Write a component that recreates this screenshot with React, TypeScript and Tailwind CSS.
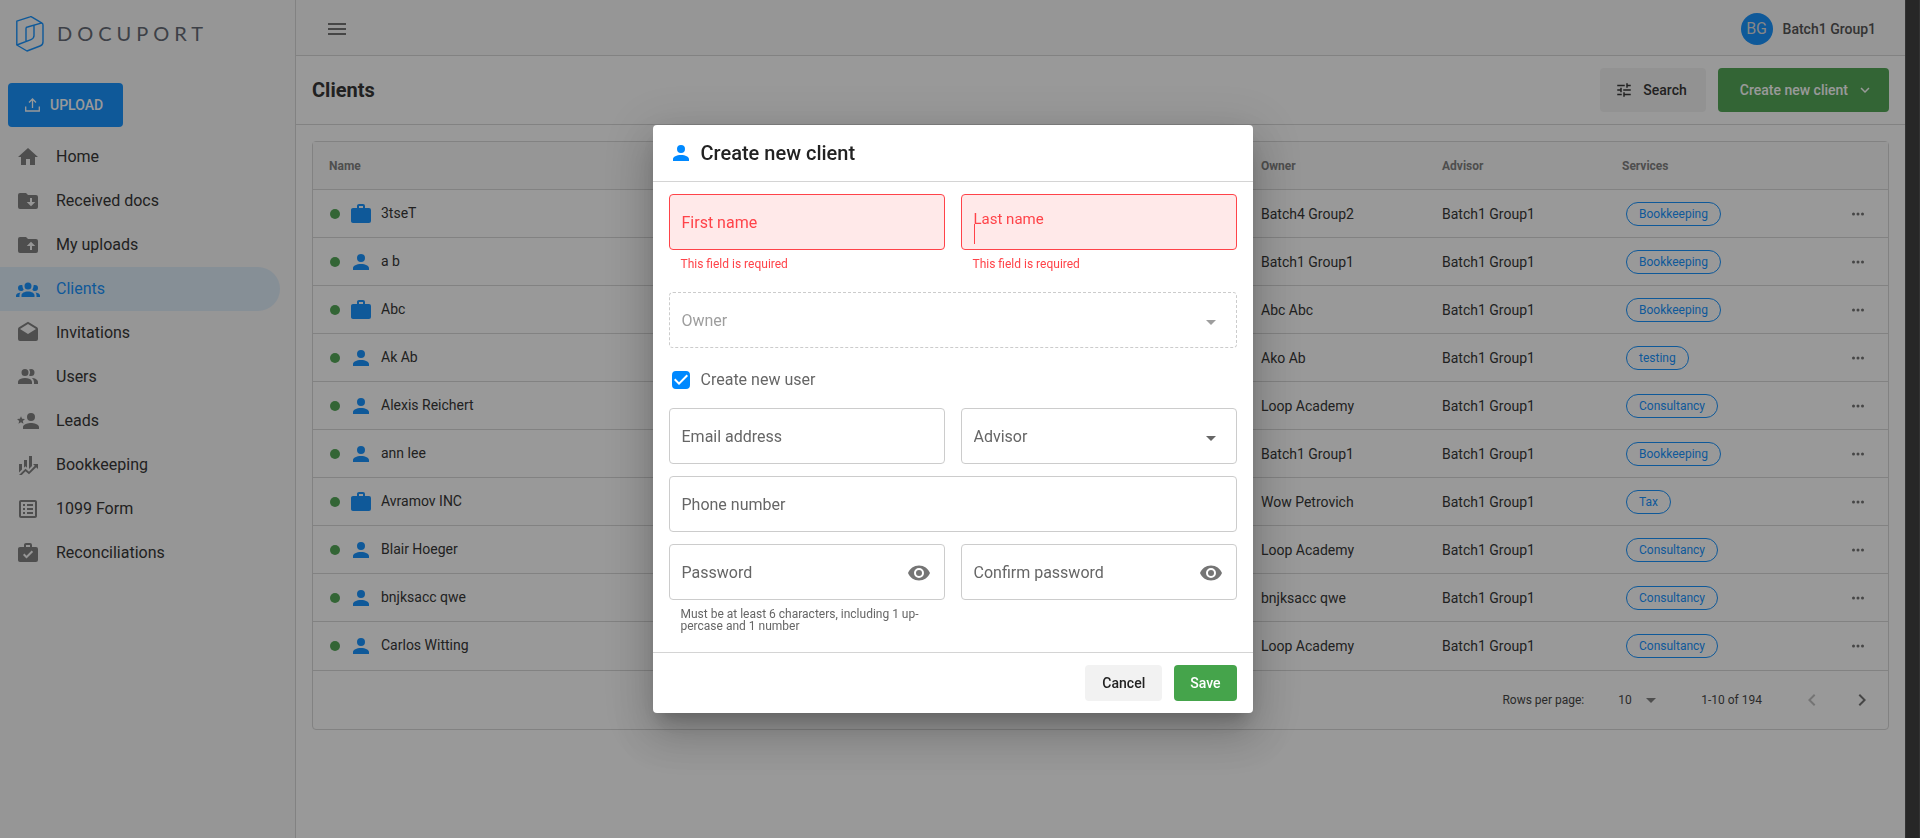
import React from 'react';

const icons = {
  home: 'M10,20V14H14V20H19V12H22L12,3L2,12H5V20H10Z',
  folderDown:
    'M20,6A2,2 0 0,1 22,8V18A2,2 0 0,1 20,20H4A2,2 0 0,1 2,18V6A2,2 0 0,1 4,4H10L12,6H20M19.25,13H16V9H14V13H10.75L15,17.25',
  folderUp:
    'M20,6A2,2 0 0,1 22,8V18A2,2 0 0,1 20,20H4A2,2 0 0,1 2,18V6A2,2 0 0,1 4,4H10L12,6H20M10.75,13H14V17H16V13H19.25L15,8.75',
  group:
    'M12,5.5A3.5,3.5 0 0,1 15.5,9A3.5,3.5 0 0,1 12,12.5A3.5,3.5 0 0,1 8.5,9A3.5,3.5 0 0,1 12,5.5M5,8C5.56,8 6.08,8.15 6.53,8.42C6.38,9.85 6.8,11.27 7.66,12.38C7.16,13.34 6.16,14 5,14A3,3 0 0,1 2,11A3,3 0 0,1 5,8M19,8A3,3 0 0,1 22,11A3,3 0 0,1 19,14C17.84,14 16.84,13.34 16.34,12.38C17.2,11.27 17.62,9.85 17.47,8.42C17.92,8.15 18.44,8 19,8M5.5,18.25C5.5,16.18 8.41,14.5 12,14.5C15.59,14.5 18.5,16.18 18.5,18.25V20H5.5V18.25M0,20V18.5C0,17.11 1.89,15.94 4.45,15.6C3.86,16.28 3.5,17.22 3.5,18.25V20H0M24,20H20.5V18.25C20.5,17.22 20.14,16.28 19.55,15.6C22.11,15.94 24,17.11 24,18.5V20Z',
  mail:
    'M4,8L12,13L20,8V8L12,3L4,8V8M22,8V18A2,2 0 0,1 20,20H4A2,2 0 0,1 2,18V8C2,7.27 2.39,6.64 2.97,6.29L12,0.64L21.03,6.29C21.61,6.64 22,7.27 22,8Z',
  users:
    'M16 17V19H2V17S2 13 9 13 16 17 16 17M12.5 7.5A3.5 3.5 0 1 0 9 11A3.5 3.5 0 0 0 12.5 7.5M15.94 13A5.32 5.32 0 0 1 18 17V19H22V17S22 13.37 15.94 13M15 4A3.39 3.39 0 0 0 13.07 4.59A5 5 0 0 1 13.07 10.41A3.39 3.39 0 0 0 15 11A3.5 3.5 0 0 0 15 4Z',
  star:
    'M15,14C12.33,14 7,15.33 7,18V20H23V18C23,15.33 17.67,14 15,14M15,12A4,4 0 0,0 19,8A4,4 0 0,0 15,4A4,4 0 0,0 11,8A4,4 0 0,0 15,12M5,13.28L7.45,14.77L6.8,11.96L9,10.08L6.11,9.83L5,7.19L3.87,9.83L1,10.08L3.18,11.96L2.5,14.77L5,13.28Z',
  finance:
    'M6,16.5L3,19.44V11H6M11,14.66L9.43,13.32L8,14.64V7H11M16,13L13,16V3H16M18.81,12.81L17,11H22V16L20.21,14.21L13,21.36L9.53,18.34L5.75,22H3L9.47,15.66L13,18.64',
  list:
    'M11 15H17V17H11V15M9 7H7V9H9V7M11 13H17V11H11V13M11 9H17V7H11V9M9 11H7V13H9V11M21 5V19C21 20.1 20.1 21 19 21H5C3.9 21 3 20.1 3 19V5C3 3.9 3.9 3 5 3H19C20.1 3 21 3.9 21 5M19 5H5V19H19V5M9 15H7V17H9V15Z',
  briefcaseCheck:
    'M10,2H14A2,2 0 0,1 16,4V6H20A2,2 0 0,1 22,8V19A2,2 0 0,1 20,21H4C2.89,21 2,20.1 2,19V8C2,6.89 2.89,6 4,6H8V4C8,2.89 8.89,2 10,2M14,6V4H10V6H14M10.5,17.5L17.09,10.91L15.68,9.5L10.5,14.67L8.41,12.59L7,14L10.5,17.5Z',
  briefcase:
    'M10,2H14A2,2 0 0,1 16,4V6H20A2,2 0 0,1 22,8V19A2,2 0 0,1 20,21H4C2.89,21 2,20.1 2,19V8C2,6.89 2.89,6 4,6H8V4C8,2.89 8.89,2 10,2M14,6V4H10V6H14Z',
  person:
    'M12,4A4,4 0 0,1 16,8A4,4 0 0,1 12,12A4,4 0 0,1 8,8A4,4 0 0,1 12,4M12,14C16.42,14 20,15.79 20,18V20H4V18C4,15.79 7.58,14 12,14Z',
  menu: 'M3,6H21V8H3V6M3,11H21V13H3V11M3,16H21V18H3V16Z',
  tune:
    'M3,17V19H9V17H3M3,5V7H13V5H3M13,21V19H21V17H13V15H11V21H13M7,9V11H3V13H7V15H9V9H7M21,13V11H11V13H21M15,9H17V7H21V5H17V3H15V9Z',
  chevronDown: 'M7.41,8.58L12,13.17L16.59,8.58L18,10L12,16L6,10L7.41,8.58Z',
  chevronLeft: 'M15.41,16.58L10.83,12L15.41,7.41L14,6L8,12L14,18L15.41,16.58Z',
  chevronRight: 'M8.59,16.58L13.17,12L8.59,7.41L10,6L16,12L10,18L8.59,16.58Z',
  caret: 'M7,10L12,15L17,10H7Z',
  eye:
    'M12,9A3,3 0 0,0 9,12A3,3 0 0,0 12,15A3,3 0 0,0 15,12A3,3 0 0,0 12,9M12,17A5,5 0 0,1 7,12A5,5 0 0,1 12,7A5,5 0 0,1 17,12A5,5 0 0,1 12,17M12,4.5C7,4.5 2.73,7.61 1,12C2.73,16.39 7,19.5 12,19.5C17,19.5 21.27,16.39 23,12C21.27,7.61 17,4.5 12,4.5Z',
  dots:
    'M16,12A2,2 0 0,1 18,10A2,2 0 0,1 20,12A2,2 0 0,1 18,14A2,2 0 0,1 16,12M10,12A2,2 0 0,1 12,10A2,2 0 0,1 14,12A2,2 0 0,1 12,14A2,2 0 0,1 10,12M4,12A2,2 0 0,1 6,10A2,2 0 0,1 8,12A2,2 0 0,1 6,14A2,2 0 0,1 4,12Z',
};

type IconName = keyof typeof icons;

function Icon({ name, className = 'size-6' }: { name: IconName; className?: string }) {
  return (
    <svg viewBox="0 0 24 24" fill="currentColor" aria-hidden="true" className={`shrink-0 ${className}`}>
      <path d={icons[name]} />
    </svg>
  );
}

const navItems: { icon: IconName; label: string }[] = [
  { icon: 'home', label: 'Home' },
  { icon: 'folderDown', label: 'Received docs' },
  { icon: 'folderUp', label: 'My uploads' },
  { icon: 'group', label: 'Clients' },
  { icon: 'mail', label: 'Invitations' },
  { icon: 'users', label: 'Users' },
  { icon: 'star', label: 'Leads' },
  { icon: 'finance', label: 'Bookkeeping' },
  { icon: 'list', label: '1099 Form' },
  { icon: 'briefcaseCheck', label: 'Reconciliations' },
];

const clients: { name: string; kind: 'briefcase' | 'person'; owner: string; service: string }[] = [
  { name: '3tseT', kind: 'briefcase', owner: 'Batch4 Group2', service: 'Bookkeeping' },
  { name: 'a b', kind: 'person', owner: 'Batch1 Group1', service: 'Bookkeeping' },
  { name: 'Abc', kind: 'briefcase', owner: 'Abc Abc', service: 'Bookkeeping' },
  { name: 'Ak Ab', kind: 'person', owner: 'Ako Ab', service: 'testing' },
  { name: 'Alexis Reichert', kind: 'person', owner: 'Loop Academy', service: 'Consultancy' },
  { name: 'ann lee', kind: 'person', owner: 'Batch1 Group1', service: 'Bookkeeping' },
  { name: 'Avramov INC', kind: 'briefcase', owner: 'Wow Petrovich', service: 'Tax' },
  { name: 'Blair Hoeger', kind: 'person', owner: 'Loop Academy', service: 'Consultancy' },
  { name: 'bnjksacc qwe', kind: 'person', owner: 'bnjksacc qwe', service: 'Consultancy' },
  { name: 'Carlos Witting', kind: 'person', owner: 'Loop Academy', service: 'Consultancy' },
];

function Sidebar() {
  return (
    <aside className="w-[296px] shrink-0 border-r border-[#d4d4d4] bg-[#f9f9f9]">
      <a href="#home" className="flex items-center gap-[13px] pt-4 pl-4">
        <svg viewBox="0 0 28 36" className="h-9 w-7" fill="none" stroke="#0089ff" strokeWidth="1.4" strokeLinejoin="round" aria-hidden="true">
          <path d="M0.8 5.2 14 0.8a2 2 0 0 1 2 .3L26 7.2c.8.5 1 1 1 2V26c0 2-1 3.300-3 4L11 35 .8 29Z" />
          <path d="M.8 29 15 23.600c2-.8 3-2 3-4V9.500M26 6.800 11.500 11a1.500 1.500 0 0 0-1.500 1.500v12.800" />
        </svg>
        <span className="pb-0.5 font-['Lato'] text-[20px] leading-6 tracking-[5px] text-[#555b68]">DOCUPORT</span>
      </a>
      <div className="pt-[31px] pl-2">
        <button className="flex h-11 items-center gap-[10px] rounded bg-[#0089ff] pr-5 pl-[17px] text-sm font-medium text-white">
          <svg viewBox="0 0 15 14" className="h-[14px] w-[15px]" fill="none" stroke="currentColor" strokeWidth="1.3" aria-hidden="true">
            <path d="M.7 8.500V13H14.300V8.500M7.500 10V1.200M4 4.500l3.500-3.500L11 4.500" />
          </svg>
          UPLOAD
        </button>
      </div>
      <nav className="pt-2 pr-[15px]">
        {navItems.map((item) => {
          const active = item.label === 'Clients';
          return (
            <a
              key={item.label}
              href="#nav"
              className={`flex h-11 items-center gap-4 rounded-r-full pl-4 text-base ${
                active ? 'bg-[#ddecfa] text-[#0089ff]' : 'text-[#222]'
              }`}
            >
              <Icon name={item.icon} className={active ? 'size-6 text-[#0089ff]' : 'size-6 text-[#757575]'} />
              {item.label}
            </a>
          );
        })}
      </nav>
    </aside>
  );
}

function ClientsTable() {
  return (
    <div className="m-4 rounded border border-[#d4d4d4]">
      <table className="w-full table-fixed border-separate border-spacing-0 text-left text-sm text-[#222]">
        <colgroup>
          <col />
          <col className="w-[181px]" />
          <col className="w-[180px]" />
          <col className="w-[221px]" />
          <col className="w-[61px]" />
        </colgroup>
        <thead>
          <tr className="h-12 bg-[#f9f9f9] text-xs text-[#757575]">
            <th className="border-b border-[#d4d4d4] px-4 font-bold">Name</th>
            <th className="border-b border-[#d4d4d4] px-4 font-bold">Owner</th>
            <th className="border-b border-[#d4d4d4] px-4 font-bold">Advisor</th>
            <th className="border-b border-[#d4d4d4] px-4 font-bold">Services</th>
            <th className="border-b border-[#d4d4d4]" aria-label="Actions" />
          </tr>
        </thead>
        <tbody className="[&>tr:not(:last-child)>td]:border-b [&>tr>td]:border-[#d4d4d4]">
          {clients.map((c) => (
            <tr key={c.name} className="h-12">
              <td className="px-4">
                <div className="flex items-center">
                  <span className="ml-px size-[10px] rounded-full bg-[#43a047]" />
                  <Icon name={c.kind} className="ml-[9px] size-6 text-[#0089ff]" />
                  <span className="ml-2 pb-0.5">{c.name}</span>
                </div>
              </td>
              <td className="px-4">{c.owner}</td>
              <td className="px-4">Batch1 Group1</td>
              <td className="px-5">
                <span className="inline-flex h-6 items-center rounded-full border border-[#0089ff] px-3 align-middle text-xs text-[#0089ff]">
                  {c.service}
                </span>
              </td>
              <td>
                <button aria-label="Row actions" className="mx-auto flex text-[#666]">
                  <Icon name="dots" className="size-[18px]" />
                </button>
              </td>
            </tr>
          ))}
        </tbody>
      </table>
      <div className="flex h-[59px] items-center justify-end border-t border-[#d4d4d4] pr-[14px] text-xs text-[#333]">
        <label htmlFor="rows">Rows per page:</label>
        <div className="ml-[34px] grid w-[45px] items-center">
          <select id="rows" className="col-start-1 row-start-1 h-8 w-full appearance-none bg-transparent">
            <option>10</option>
          </select>
          <Icon name="caret" className="pointer-events-none col-start-1 row-start-1 size-6 justify-self-end text-[#757575]" />
        </div>
        <span className="ml-[38px]">1-10 of 194</span>
        <button aria-label="Previous page" disabled className="ml-[38px] text-[#bbb]">
          <Icon name="chevronLeft" />
        </button>
        <button aria-label="Next page" className="ml-[26px] text-[#666]">
          <Icon name="chevronRight" />
        </button>
      </div>
    </div>
  );
}

function TextField({
  id,
  label,
  type = 'text',
  error,
  hint,
  typing,
}: {
  id: string;
  label: string;
  type?: string;
  error?: string;
  hint?: string;
  typing?: boolean;
}) {
  return (
    <div className="min-w-0">
      <div
        className={`relative flex h-14 items-center rounded border ${
          error ? 'border-[#ff4349] bg-[#ffe9e9] text-[#ff4349]' : 'border-[#ccc] text-[#666]'
        }`}
      >
        <label
          htmlFor={id}
          className={
            typing
              ? 'pointer-events-none absolute top-[14px] left-3 text-[15px] leading-5'
              : 'pointer-events-none absolute top-4 left-3 text-base'
          }
        >
          {label}
        </label>
        {typing && <span className="absolute top-[29px] left-3 h-5 w-px bg-[#ff4349]" />}
        <input id={id} type={type} className="h-full min-w-0 flex-1 bg-transparent px-3 outline-none" />
        {type === 'password' && (
          <button type="button" aria-label="Show password" className="mt-px mr-[13px] text-[#757575]">
            <Icon name="eye" />
          </button>
        )}
      </div>
      {error && <p className="px-3 pt-2 text-xs leading-3 text-[#ff4349]">{error}</p>}
      {hint && <p className="px-3 pt-2 text-xs leading-3 text-[#666]">{hint}</p>}
    </div>
  );
}

function SelectField({ id, label, disabled }: { id: string; label: string; disabled?: boolean }) {
  return (
    <div
      className={`grid h-14 min-w-0 items-center rounded border border-[#ccc] ${
        disabled ? 'border-dashed text-[#9e9e9e]' : 'text-[#666]'
      }`}
    >
      <select
        id={id}
        aria-label={label}
        disabled={disabled}
        className="col-start-1 row-start-1 h-full w-full appearance-none bg-transparent px-3 pt-0.5 text-base opacity-100 outline-none"
      >
        <option>{label}</option>
      </select>
      <Icon name="caret" className="pointer-events-none col-start-1 row-start-1 mt-[3px] mr-[13px] size-6 justify-self-end" />
    </div>
  );
}

function CreateClientDialog() {
  return (
    <form
      role="dialog"
      aria-labelledby="dialog-title"
      className="w-full max-w-[600px] rounded bg-white shadow-[0_11px_15px_-7px_rgba(0,0,0,.2),0_24px_38px_3px_rgba(0,0,0,.14),0_9px_46px_8px_rgba(0,0,0,.12)]"
    >
      <header className="flex h-[57px] items-center gap-2 border-b border-[#d4d4d4] px-4">
        <Icon name="person" className="size-6 text-[#0089ff]" />
        <h2 id="dialog-title" className="text-xl font-medium text-[#222]">
          Create new client
        </h2>
      </header>
      <div className="flex flex-col gap-3 px-4 pt-3 pb-5">
        <div className="grid grid-cols-2 gap-4 pb-[10px]">
          <TextField id="first" label="First name" error="This field is required" />
          <TextField id="last" label="Last name" error="This field is required" typing />
        </div>
        <SelectField id="owner" label="Owner" disabled />
        <label className="flex h-9 items-center gap-2 pt-1 text-base text-[#666]">
          <span className="grid size-6 place-items-center">
            <input
              type="checkbox"
              defaultChecked
              className="peer col-start-1 row-start-1 size-[18px] appearance-none rounded-sm border-2 border-[#757575] checked:border-[#0089ff] checked:bg-[#0089ff]"
            />
            <svg viewBox="3 3 18 18" fill="white" aria-hidden="true" className="pointer-events-none col-start-1 row-start-1 size-[18px] opacity-0 peer-checked:opacity-100">
              <path d="M10,17L5,12L6.41,10.58L10,14.17L17.590,6.580L19,8Z" />
            </svg>
          </span>
          Create new user
        </label>
        <div className="grid grid-cols-2 gap-4">
          <TextField id="email" label="Email address" type="email" />
          <SelectField id="advisor" label="Advisor" />
        </div>
        <TextField id="phone" label="Phone number" type="tel" />
        <div className="grid grid-cols-2 gap-4">
          <TextField id="password" label="Password" type="password" hint="Must be at least 6 characters, including 1 up&shy;percase and 1 number" />
          <TextField id="confirm" label="Confirm password" type="password" />
        </div>
      </div>
      <footer className="flex justify-end gap-3 border-t border-[#d4d4d4] px-4 py-3">
        <button type="button" className="h-9 rounded bg-[#f2f2f2] px-[17px] text-sm font-medium text-[#222]">
          Cancel
        </button>
        <button type="submit" className="h-9 rounded bg-[#45a44b] px-4 text-sm font-medium text-white">
          Save
        </button>
      </footer>
    </form>
  );
}

export default function App() {
  return (
    <div className="flex min-h-screen bg-white font-['Roboto',sans-serif]">
      <Sidebar />
      <div className="min-w-0 flex-1">
        <header className="flex h-14 items-center justify-between border-b border-[#d4d4d4] bg-[#f9f9f9] pr-[29px] pl-[29px]">
          <button aria-label="Toggle menu" className="pt-0.5 text-[#666]">
            <Icon name="menu" />
          </button>
          <div className="flex items-center gap-[10px] pt-0.5">
            <span className="grid size-8 place-items-center rounded-full bg-[#0089ff] text-base text-[#ddd]">BG</span>
            <span className="text-sm font-medium text-[#444]">Batch1 Group1</span>
          </div>
        </header>
        <main>
          <div className="flex h-[69px] items-center justify-between border-b border-[#d4d4d4] px-4">
            <h1 className="text-xl font-bold text-[#222]">Clients</h1>
            <div className="flex gap-3">
              <button className="flex h-11 items-center gap-[10px] rounded bg-[#f2f2f2] pr-[19px] pl-[15px] text-sm font-medium text-[#222]">
                <Icon name="tune" className="size-[18px]" />
                Search
              </button>
              <button className="flex h-11 items-center gap-2 rounded bg-[#43a047] pr-[15px] pl-[22px] text-sm font-medium text-white">
                Create new client
                <Icon name="chevronDown" className="size-[18px]" />
              </button>
            </div>
          </div>
          <ClientsTable />
        </main>
      </div>
      <div className="w-[15px] shrink-0" />
      <div className="fixed inset-0 flex bg-[#212121]/46">
        <div className="flex flex-1 items-center justify-center">
          <CreateClientDialog />
        </div>
        <div className="w-[15px] border-x border-[#333] bg-[#272727]" />
      </div>
    </div>
  );
}
